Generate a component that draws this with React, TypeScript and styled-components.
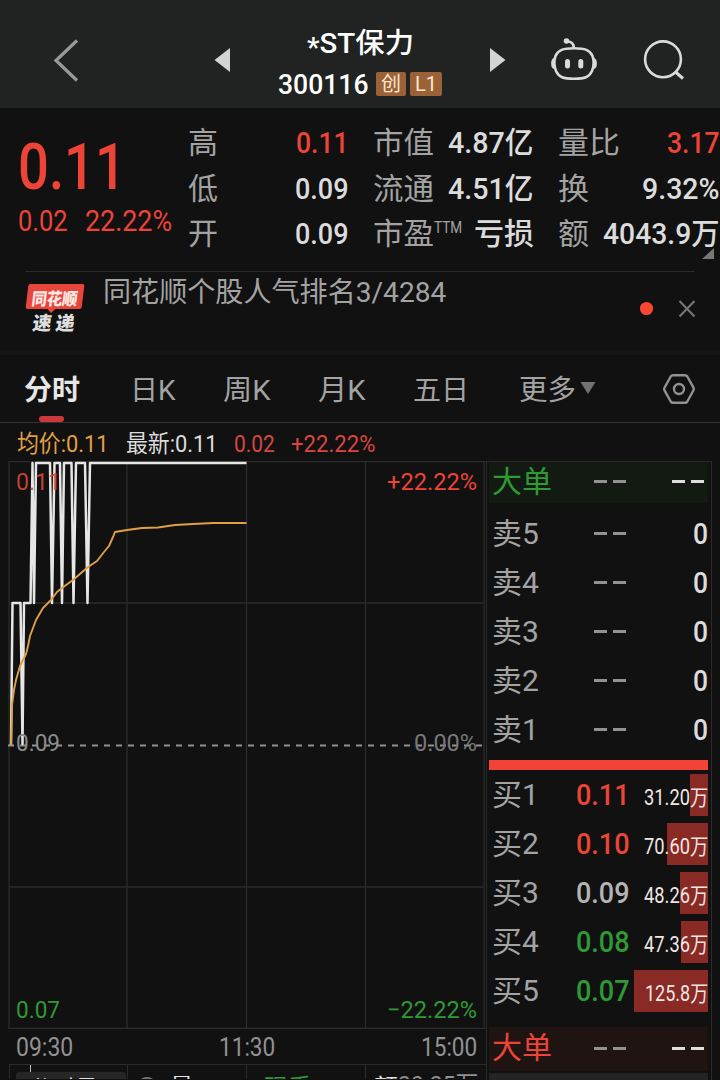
import React, { useLayoutEffect, useRef } from "react";
import styled, { createGlobalStyle } from "styled-components";

const c = {
  bg: "#111111",
  header: "#212322",
  red: "#ec4437",
  redSoft: "#d8473f",
  green: "#2f9a35",
  gray: "#a3a3a3",
  light: "#dcdcdc",
  white: "#ffffff",
  line: "#2b2b2b",
  orange: "#e0a045",
};

const Global = createGlobalStyle`
  * { box-sizing: border-box; }
  body {
    margin: 0;
    background: ${c.bg};
    font-family: Roboto, "Noto Sans CJK SC", sans-serif;
  }
`;

const FitBox = styled.span<{ $w: number }>`
  display: block;
  flex: none;
  width: ${(p) => p.$w}px;
  white-space: nowrap;
`;

const FitInner = styled.span`
  display: inline-block;
  transform-origin: 0 50%;
`;

/* Squeezes or stretches its text horizontally to the given width. */
function Fit({ w, children }: { w: number; children: React.ReactNode }) {
  const ref = useRef<HTMLSpanElement>(null);
  useLayoutEffect(() => {
    const el = ref.current;
    if (el) el.style.transform = `scaleX(${w / el.offsetWidth})`;
  }, [w, children]);
  return (
    <FitBox $w={w}>
      <FitInner ref={ref}>{children}</FitInner>
    </FitBox>
  );
}

const Page = styled.main`
  width: 720px;
  height: 1080px;
  overflow: hidden;
  background: ${c.bg};
  color: ${c.light};
`;

/* ---------- header ---------- */
const Header = styled.header`
  display: flex;
  height: 108px;
  background: ${c.header};
  padding: 0 34px 0 52px;
`;

const HeaderIcon = styled.svg<{ $w: number; $ml?: number }>`
  display: block;
  flex: none;
  width: ${(p) => p.$w}px;
  height: 108px;
  margin-left: ${(p) => p.$ml ?? 0}px;
`;

const TitleBlock = styled.div`
  flex: none;
  width: 164px;
  margin-left: 48px;
  padding-top: 24px;
  color: ${c.white};
`;

const StockName = styled.div`
  display: flex;
  justify-content: center;
  height: 40px;
  line-height: 40px;
  font-size: 28px;
  font-weight: 500;
`;

const Star = styled.span`
  display: inline-block;
  font-size: 27px;
  transform: translateY(4px);
`;

const CodeRow = styled.div`
  display: flex;
  align-items: center;
  height: 44px;
  line-height: 46px;
  font-size: 28px;
  font-weight: 500;
  margin-top: -1px;
`;

const Badge = styled.span<{ $w: number; $ml: number }>`
  flex: none;
  width: ${(p) => p.$w}px;
  height: 24px;
  margin-left: ${(p) => p.$ml}px;
  margin-top: -2px;
  border-radius: 2px;
  background: #9b6238;
  color: #ffe6cc;
  font-size: 20px;
  font-weight: 400;
  line-height: 24px;
  text-align: center;
`;

/* ---------- quote ---------- */
const Quote = styled.section`
  position: relative;
  display: flex;
  height: 163px;
  padding: 12px 0 0 18px;
`;

const PriceCol = styled.div`
  flex: none;
  width: 170px;
  color: ${c.red};
`;

const BigPrice = styled.div`
  height: 72px;
  margin-top: 12px;
  line-height: 71px;
  font-size: 65px;
  font-weight: 500;
`;

const Change = styled.div`
  display: flex;
  gap: 17px;
  height: 34px;
  line-height: 34px;
  font-size: 29px;
`;

const StatCol = styled.div<{ $w: number; $ml?: number }>`
  flex: none;
  width: ${(p) => p.$w}px;
  margin-left: ${(p) => p.$ml ?? 0}px;
`;

const StatRow = styled.div`
  display: flex;
  justify-content: space-between;
  height: 45.5px;
  line-height: 46px;
  font-size: 30px;
`;

const StatLabel = styled.span`
  display: flex;
  color: ${c.gray};
`;

const StatValue = styled.span<{ $color?: string }>`
  display: flex;
  font-weight: 500;
  color: ${(p) => p.$color ?? c.light};
`;

const Sup = styled.span`
  margin-top: -7px;
  font-size: 17px;
`;

const Corner = styled.svg`
  position: absolute;
  left: 702px;
  top: 140px;
  width: 12px;
  height: 11px;
`;

/* ---------- news ---------- */
const News = styled.section`
  display: flex;
  height: 79px;
  margin: 0 25px;
  border-top: 1px solid ${c.line};
`;

const Logo = styled.div`
  flex: none;
  width: 78px;
  padding-top: 12px;
`;

const LogoTop = styled.div`
  position: relative;
  width: 56px;
  height: 25px;
  margin-left: 2px;
  padding-left: 5px;
  border-radius: 2px;
  transform: skewX(-7deg);
  background: #e8463c;
  color: #ffe9e2;
  font: 900 17px/27px "Noto Sans CJK SC", sans-serif;

  &::after {
    content: "";
    position: absolute;
    left: 22px;
    top: 25px;
    border: 4px solid transparent;
    border-top-color: #e8463c;
    border-bottom: 0;
  }
`;

const LogoBottom = styled.div`
  display: flex;
  gap: 4px;
  margin-left: 8px;
  height: 25px;
  transform: skewX(-8deg);
  color: #dedede;
  font: 900 19px/26px "Noto Sans CJK SC", sans-serif;
`;

const NewsText = styled.div`
  flex: 1;
  height: 40px;
  line-height: 42px;
  font-size: 28px;
  color: ${c.gray};
`;

const NewsIcons = styled.svg`
  flex: none;
  width: 60px;
  height: 40px;
  margin-top: 17px;
`;

/* ---------- tabs ---------- */
const Tabs = styled.nav`
  position: relative;
  display: flex;
  height: 73px;
  padding-left: 24px;
  border-top: 5px solid #151515;
  border-bottom: 1px solid #333333;
  line-height: 72px;
  font-size: 28px;
  color: ${c.gray};
`;

const Tab = styled.div<{ $active?: boolean; $ml?: number }>`
  flex: none;
  margin-left: ${(p) => p.$ml ?? 0}px;
  font-weight: ${(p) => (p.$active ? 700 : 400)};
  color: ${(p) => (p.$active ? "#e6e6e6" : c.gray)};
`;

const Underline = styled.i`
  position: absolute;
  left: 39px;
  bottom: 0;
  width: 25px;
  height: 6px;
  border-radius: 3px;
  background: #cf383a;
`;

const TabIcon = styled.svg<{ $w: number; $ml: number }>`
  flex: none;
  width: ${(p) => p.$w}px;
  height: 68px;
  margin-left: ${(p) => p.$ml}px;
`;

const Info = styled.div`
  display: flex;
  height: 38px;
  padding-left: 17px;
  line-height: 43px;
  font-size: 24px;
`;

const InfoItem = styled.span<{ $color: string; $ml?: number }>`
  margin-left: ${(p) => p.$ml ?? 0}px;
  color: ${(p) => p.$color};
`;

/* ---------- chart and order book ---------- */
const Body = styled.div`
  display: flex;
  height: 619px;
`;

const Left = styled.section`
  flex: none;
  width: 486px;
`;

const Chart = styled.svg`
  display: block;
  width: 486px;
  height: 568px;
`;

const Times = styled.div`
  display: flex;
  height: 36px;
  padding-left: 16px;
  line-height: 37px;
  font-size: 25px;
  color: #929292;
`;

const TimeItem = styled.span<{ $ml?: number }>`
  margin-left: ${(p) => p.$ml ?? 0}px;
`;

const Volume = styled.div`
  display: flex;
  height: 15px;
  margin-top: -1px;
  margin-left: 9px;
  overflow: hidden;
  border-top: 1.5px solid ${c.line};
  border-left: 1px solid ${c.line};
  background:
    linear-gradient(#bdbdbd, #bdbdbd) 20px 0 / 1px 100% no-repeat,
    linear-gradient(${c.line}, ${c.line}) 117px 0 / 1px 100% no-repeat,
    linear-gradient(${c.line}, ${c.line}) 236px 0 / 1px 100% no-repeat,
    linear-gradient(${c.line}, ${c.line}) 355px 0 / 1px 100% no-repeat;
  font-size: 24px;
  line-height: 28px;
  color: #e2e2e2;
`;

const VolumeButton = styled.span`
  flex: none;
  width: 110px;
  height: 30px;
  margin: 7px 0 0 6px;
  padding-left: 14px;
  border-radius: 3px;
  background: #262626;
  line-height: 37px;
`;

const Help = styled.i`
  flex: none;
  width: 20px;
  height: 20px;
  margin: 12px 0 0 11px;
  border: 2px solid #777;
  border-radius: 50%;
`;

const VolumeItem = styled.span<{ $color?: string; $ml: number; $top: number }>`
  flex: none;
  margin: ${(p) => p.$top}px 0 0 ${(p) => p.$ml}px;
  color: ${(p) => p.$color ?? "#e2e2e2"};
`;

const Book = styled.section`
  width: 226px;
  height: 620px;
  padding: 0 3px 0 2px;
  border: 1px solid ${c.line};
  border-bottom: 0;
`;

const BookRow = styled.div<{ $h: number; $bg?: string; $mb?: number; $pb?: number }>`
  display: flex;
  align-items: center;
  height: ${(p) => p.$h}px;
  margin-bottom: ${(p) => p.$mb ?? 0}px;
  padding-left: 3px;
  padding-bottom: ${(p) => p.$pb ?? 0}px;
  background: ${(p) => p.$bg ?? "transparent"};
  line-height: ${(p) => p.$h}px;
  font-size: 30px;
`;

const Side = styled.span<{ $color?: string }>`
  flex: none;
  width: 84px;
  color: ${(p) => p.$color ?? c.gray};
`;

const Price = styled.span<{ $color: string }>`
  flex: none;
  width: 54px;
  font-weight: 500;
  color: ${(p) => p.$color};
`;

const Dashes = styled.span<{ $ml: number; $color: string }>`
  display: flex;
  gap: 6px;
  margin-left: ${(p) => p.$ml}px;

  &::before,
  &::after {
    content: "";
    width: 13px;
    height: 3px;
    background: ${(p) => p.$color};
  }
`;

const Zero = styled.span`
  margin-left: auto;
  font-weight: 500;
`;

const Amount = styled.span<{ $bar: number }>`
  display: flex;
  justify-content: flex-end;
  flex: 1;
  height: 42px;
  line-height: 48px;
  font-size: 22px;
  color: #f0e6e4;
  background: linear-gradient(#892a25, #892a25) right / ${(p) => p.$bar}px 100%
    no-repeat;
`;

const Ratio = styled.div`
  height: 10px;
  background: #f34336;
`;

const Spacer = styled.div<{ $h: number }>`
  height: ${(p) => p.$h}px;
`;

const Footer = styled.div`
  height: 10px;
  margin-top: 2px;
  background: #242424;
`;

type Stat = { l: string; lw: number; v: string; vw: number; color?: string; sup?: string };

const stats: { w: number; ml: number; rows: Stat[] }[] = [
  {
    w: 161,
    ml: 0,
    rows: [
      { l: "高", lw: 30, v: "0.11", vw: 53, color: c.red },
      { l: "低", lw: 30, v: "0.09", vw: 54 },
      { l: "开", lw: 30, v: "0.09", vw: 54 },
    ],
  },
  {
    w: 161,
    ml: 24,
    rows: [
      { l: "市值", lw: 61, v: "4.87亿", vw: 86 },
      { l: "流通", lw: 61, v: "4.51亿", vw: 86 },
      { l: "市盈", lw: 61, sup: "TTM", v: "亏损", vw: 60 },
    ],
  },
  {
    w: 162,
    ml: 24,
    rows: [
      { l: "量比", lw: 62, v: "3.17", vw: 53, color: c.red },
      { l: "换", lw: 31, v: "9.32%", vw: 78 },
      { l: "额", lw: 31, v: "4043.9万", vw: 117 },
    ],
  },
];

const tabs = [
  { t: "日K", w: 46, ml: 50 },
  { t: "周K", w: 48, ml: 47 },
  { t: "月K", w: 48, ml: 47 },
  { t: "五日", w: 56, ml: 47 },
  { t: "更多", w: 57, ml: 50 },
];

const bids = [
  { n: 1, p: "0.11", color: c.red, a: "31.20万", w: 64, bar: 18 },
  { n: 2, p: "0.10", color: c.red, a: "70.60万", w: 64, bar: 41 },
  { n: 3, p: "0.09", color: "#b4b4b4", a: "48.26万", w: 64, bar: 28 },
  { n: 4, p: "0.08", color: c.green, a: "47.36万", w: 64, bar: 27 },
  { n: 5, p: "0.07", color: c.green, a: "125.8万", w: 63, bar: 74 },
];

const pricePath =
  "M11 745L12.5 603H20.5L22.5 744L24 603H30.5L32.5 463L34 603L36 463H50L52 603L54.5 463H60L62 603L64 463H71.5L73.5 603L76 463H85L87.5 603L90 463H246.5";
const averagePath =
  "M11 745L12 705L14 690L16 680L20 666L26 654L28 646L30 636L36 620L43 608L51 600L57 592L62 588L73 580L88 567L97 561L104 552L109 546L113 537L115 532L127 530L142 528L158 527.5L175 525L193 524L213 523H246.5";

function PriceChart() {
  return (
    <Chart viewBox="0 461 486 568" fontSize="24">
      <g stroke={c.line} fill="none" strokeWidth="1.3">
        <path d="M9 1029V461.7H486M9 603H484M9 887H484M9 1028.5H486M127 461V1029M246.5 461V1029M365.5 461V1029M484 461V1029" />
      </g>
      <path d="M8 745.5H484" stroke="#929292" strokeWidth="2" strokeDasharray="6 6" />
      <path d={pricePath} fill="none" stroke="#e6e6e6" strokeWidth="2.500" strokeLinejoin="round" />
      <path d={averagePath} fill="none" stroke={c.orange} strokeWidth="1.900" strokeLinejoin="round" />
      <text x="16" y="490" fill={c.redSoft} fillOpacity=".9" textLength="45" lengthAdjust="spacingAndGlyphs">0.11</text>
      <text x="387" y="490" fill={c.red} textLength="90" lengthAdjust="spacingAndGlyphs">+22.22%</text>
      <text x="16" y="751" fill="#8b8b8b" textLength="44" lengthAdjust="spacingAndGlyphs">0.09</text>
      <text x="414" y="751" fill="#777777" textLength="63" lengthAdjust="spacingAndGlyphs">0.00%</text>
      <text x="16" y="1018" fill={c.green} textLength="44" lengthAdjust="spacingAndGlyphs">0.07</text>
      <text x="387" y="1018" fill={c.green} textLength="90" lengthAdjust="spacingAndGlyphs">−22.22%</text>
    </Chart>
  );
}

export default function App() {
  return (
    <Page>
      <Global />
      <Header>
        <HeaderIcon $w={28} viewBox="52 0 28 108">
          <path d="M77 40.500L56 60.500L77 80.500" fill="none" stroke="#999999" strokeWidth="3.2" />
        </HeaderIcon>
        <HeaderIcon $w={16} $ml={134} viewBox="214 0 16 108">
          <path d="M214.500 60L230 48V72Z" fill="#d4d4d4" />
        </HeaderIcon>
        <TitleBlock>
          <StockName>
            <Fit w={107}>
              <Star>*</Star>ST保力
            </Fit>
          </StockName>
          <CodeRow>
            <Fit w={90}>300116</Fit>
            <Badge $w={30} $ml={8}>创</Badge>
            <Badge $w={32} $ml={4}>L1</Badge>
          </CodeRow>
        </TitleBlock>
        <HeaderIcon $w={16} $ml={48} viewBox="490 0 16 108">
          <path d="M490 48L505.500 60L490 72Z" fill="#d4d4d4" />
        </HeaderIcon>
        <HeaderIcon $w={48} $ml={44} viewBox="550 0 48 108" fill="none" stroke="#dadada" strokeWidth="2.600">
          <path d="M574 48.200C585 48.200 590 50 592.500 56C594.300 61 594 66 592 71C589 77.500 585 78.700 574 78.700C563 78.700 559 77.500 556 71C554 66 553.700 61 555.500 56C558 50 563 48.200 574 48.200Z" />
          <path d="M573.800 48C573.800 43.500 571 41.500 567 41.500" />
          <circle cx="566.500" cy="41" r="2.800" fill="#dadada" stroke="none" />
          <path d="M554.500 59.500C552 60 552 67 554.500 67.500M593.500 59.500C596 60 596 67 593.500 67.500" strokeWidth="3" />
          <path d="M567.500 61.500V66M580.800 61.500V66" strokeWidth="5" strokeLinecap="round" />
        </HeaderIcon>
        <HeaderIcon $w={44} $ml={44} viewBox="642 0 44 108" fill="none" stroke="#dadada" strokeWidth="2.600">
          <circle cx="663" cy="59.300" r="17.900" />
          <path d="M675.500 72L683 78.500" strokeWidth="3" />
        </HeaderIcon>
      </Header>

      <Quote>
        <PriceCol>
          <BigPrice>
            <Fit w={108}>0.11</Fit>
          </BigPrice>
          <Change>
            <Fit w={50}>0.02</Fit>
            <Fit w={87}>22.22%</Fit>
          </Change>
        </PriceCol>
        {stats.map((col, i) => (
          <StatCol key={i} $w={col.w} $ml={col.ml}>
            {col.rows.map((r) => (
              <StatRow key={r.l}>
                <StatLabel>
                  <Fit w={r.lw}>{r.l}</Fit>
                  {r.sup && (
                    <Sup>
                      <Fit w={28}>{r.sup}</Fit>
                    </Sup>
                  )}
                </StatLabel>
                <StatValue $color={r.color}>
                  <Fit w={r.vw}>{r.v}</Fit>
                </StatValue>
              </StatRow>
            ))}
          </StatCol>
        ))}
        <Corner viewBox="0 0 12 11">
          <path d="M12 0V11H0Z" fill="#777777" />
        </Corner>
      </Quote>

      <News>
        <Logo>
          <LogoTop>
            <Fit w={46}>同花顺</Fit>
          </LogoTop>
          <LogoBottom>
            <Fit w={19}>速</Fit>
            <Fit w={19}>递</Fit>
          </LogoBottom>
        </Logo>
        <NewsText>
          <Fit w={343}>同花顺个股人气排名3/4284</Fit>
        </NewsText>
        <NewsIcons viewBox="0 0 60 40">
          <circle cx="11.500" cy="19.500" r="6.600" fill="#fb4632" />
          <path d="M44.500 12L59.500 27.500M59.500 12L44.500 27.500" stroke="#777777" strokeWidth="2" />
        </NewsIcons>
      </News>

      <Tabs>
        <Tab $active>
          <Fit w={56}>分时</Fit>
        </Tab>
        {tabs.map((t) => (
          <Tab key={t.t} $ml={t.ml}>
            <Fit w={t.w}>{t.t}</Fit>
          </Tab>
        ))}
        <TabIcon $w={16} $ml={4} viewBox="0 0 16 68">
          <path d="M0.500 27H15.500L8 39Z" fill="#727272" />
        </TabIcon>
        <TabIcon $w={34} $ml={66} viewBox="0 0 34 68" fill="none" stroke="#929292" strokeWidth="2.400">
          <path d="M11 20.200H23Q24.500 20.200 25.300 21.500L31.500 32.700Q32.200 34 31.500 35.300L25.300 46.500Q24.500 47.800 23 47.800H11Q9.500 47.800 8.700 46.500L2.500 35.300Q1.800 34 2.500 32.700L8.700 21.500Q9.500 20.200 11 20.200Z" />
          <circle cx="17" cy="34" r="5" />
        </TabIcon>
        <Underline />
      </Tabs>

      <Info>
        <InfoItem $color={c.orange}>
          <Fit w={92}>均价:0.11</Fit>
        </InfoItem>
        <InfoItem $color={c.light} $ml={17}>
          <Fit w={92}>最新:0.11</Fit>
        </InfoItem>
        <InfoItem $color={c.redSoft} $ml={16}>
          <Fit w={41}>0.02</Fit>
        </InfoItem>
        <InfoItem $color={c.redSoft} $ml={16}>
          <Fit w={84}>+22.22%</Fit>
        </InfoItem>
      </Info>

      <Body>
        <Left>
          <PriceChart />
          <Times>
            <TimeItem>
              <Fit w={57}>09:30</Fit>
            </TimeItem>
            <TimeItem $ml={146}>
              <Fit w={56}>11:30</Fit>
            </TimeItem>
            <TimeItem $ml={146}>
              <Fit w={56}>15:00</Fit>
            </TimeItem>
          </Times>
          <Volume>
            <VolumeButton>
              <Fit w={68}>分时量</Fit>
            </VolumeButton>
            <Help />
            <VolumeItem $ml={13} $top={9}>
              <Fit w={82}>量:2011</Fit>
            </VolumeItem>
            <VolumeItem $ml={12} $top={9} $color={c.green}>
              <Fit w={94}>现手:220</Fit>
            </VolumeItem>
            <VolumeItem $ml={16} $top={9}>
              <Fit w={24}>额</Fit>
            </VolumeItem>
            <VolumeItem $ml={0} $top={6} $color="#909090">
              <Fit w={80}>20.25万</Fit>
            </VolumeItem>
          </Volume>
        </Left>

        <Book>
          <BookRow $h={41} $mb={6} $pb={3} $bg="#121a12">
            <Side $color={c.green}>
              <Fit w={60}>大单</Fit>
            </Side>
            <Dashes $ml={18} $color="#929292" />
            <Dashes $ml={46} $color="#dddddd" />
          </BookRow>
          {[5, 4, 3, 2, 1].map((n) => (
            <BookRow key={n} $h={49} $pb={1}>
              <Side>
                <Fit w={47}>卖{n}</Fit>
              </Side>
              <Dashes $ml={18} $color="#929292" />
              <Zero>
                <Fit w={15}>0</Fit>
              </Zero>
            </BookRow>
          ))}
          <Spacer $h={6} />
          <Ratio />
          {bids.map((b) => (
            <BookRow key={b.n} $h={49}>
              <Side>
                <Fit w={47}>买{b.n}</Fit>
              </Side>
              <Price $color={b.color}>
                <Fit w={54}>{b.p}</Fit>
              </Price>
              <Amount $bar={b.bar}>
                <Fit w={b.w}>{b.a}</Fit>
              </Amount>
            </BookRow>
          ))}
          <Spacer $h={12} />
          <BookRow $h={44} $pb={2} $bg="#1f1412">
            <Side $color={c.red}>
              <Fit w={60}>大单</Fit>
            </Side>
            <Dashes $ml={18} $color="#929292" />
            <Dashes $ml={46} $color="#dddddd" />
          </BookRow>
          <Footer />
        </Book>
      </Body>
    </Page>
  );
}
